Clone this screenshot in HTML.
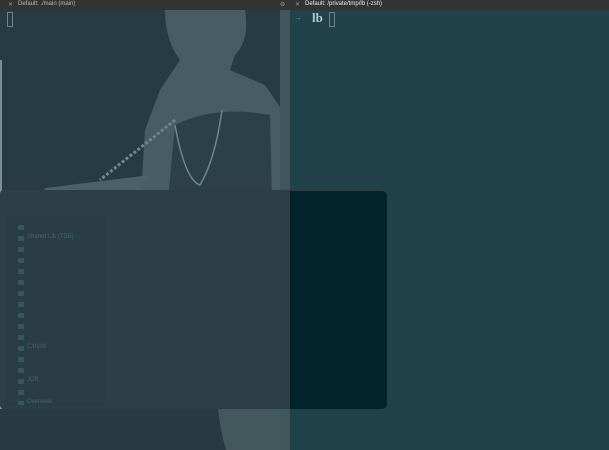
<!DOCTYPE html>
<html><head><style>
body{margin:0;width:609px;height:450px;overflow:hidden;background:#21414b;font-family:"Liberation Sans",sans-serif;position:relative}
div{position:absolute;box-sizing:border-box}
.t{font-size:6px;color:#ddd;top:1px;white-space:nowrap}
</style></head><body>
<div style="left:0;top:0;width:609px;height:10px;background:#333"></div>
<div class="t" style="left:8px;color:#999">✕</div>
<div class="t" style="left:18px;color:#bbb">Default: ./main (main)</div>
<div class="t" style="left:280px;color:#aaa">⊖</div>
<div class="t" style="left:295px;color:#999">✕</div>
<div class="t" style="left:305px;color:#eee">Default: /private/tmp/lb (-zsh)</div>
<div style="left:0;top:10px;width:290px;height:440px;background:#263b42"></div>
<svg style="position:absolute;left:0;top:10px" width="290" height="440">
<path d="M165 0 L245 0 Q250 30 235 45 L230 60 L265 75 L282 100 L282 200 L140 200 L145 120 L160 80 L180 50 Q165 30 165 0 Z" fill="#455d63"/>
<path d="M175 115 Q215 95 270 105 L272 190 L168 190 Z" fill="#2b4047"/>
<path d="M150 165 L45 178 L42 185 L140 182 Z" fill="#4a6167"/>
<path d="M175 115 Q185 170 200 175 Q215 150 222 100" stroke="#6f878b" stroke-width="1.5" fill="none"/>
<path d="M175 110 L100 170" stroke="#6f878b" stroke-width="3" fill="none" stroke-dasharray="3 2"/>
</svg>
<div style="left:280px;top:10px;width:10px;height:440px;background:#3f565c"></div>
<div style="left:7px;top:12px;width:6px;height:15px;border:1px solid #6d8489"></div>
<div style="left:0;top:60px;width:2px;height:390px;background:#7a9096"></div>
<div style="left:0;top:190px;width:387px;height:219px;background:#2c3f46;border-radius:4px"></div>
<div style="left:290px;top:191px;width:97px;height:218px;background:#03232c;border-radius:0 5px 5px 0"></div>
<div style="left:5px;top:216px;width:100px;height:190px;background:#2a3d44"></div>
<svg style="position:absolute;left:0;top:409px" width="290" height="41">
<rect width="290" height="41" fill="#283a41"/>
<path d="M218 0 L280 0 L280 41 L226 41 Q220 20 218 0 Z" fill="#42585d"/>
<rect x="280" width="10" height="41" fill="#3f565c"/>
</svg>
<div style="left:18px;top:225px;width:6px;height:180px;background:repeating-linear-gradient(#35575f 0 5px,transparent 5px 11px)"></div>
<div style="left:27px;top:234px;font-size:6px;color:#46646b">Shared Lib (TDB)</div>
<div style="left:27px;top:344px;font-size:6px;color:#46646b">C/thirdl</div>
<div style="left:27px;top:377px;font-size:6px;color:#46646b">JCR</div>
<div style="left:27px;top:399px;font-size:6px;color:#46646b">Overview</div>
<div style="left:294px;top:13px;font-size:8px;color:#6b8a92">→</div>
<div style="left:312px;top:10px;font-size:13px;font-weight:bold;color:#b7c8cc;font-family:'Liberation Serif',serif">lb</div>
<div style="left:329px;top:12px;width:6px;height:15px;border:1px solid #6d8489"></div>
</body></html>
